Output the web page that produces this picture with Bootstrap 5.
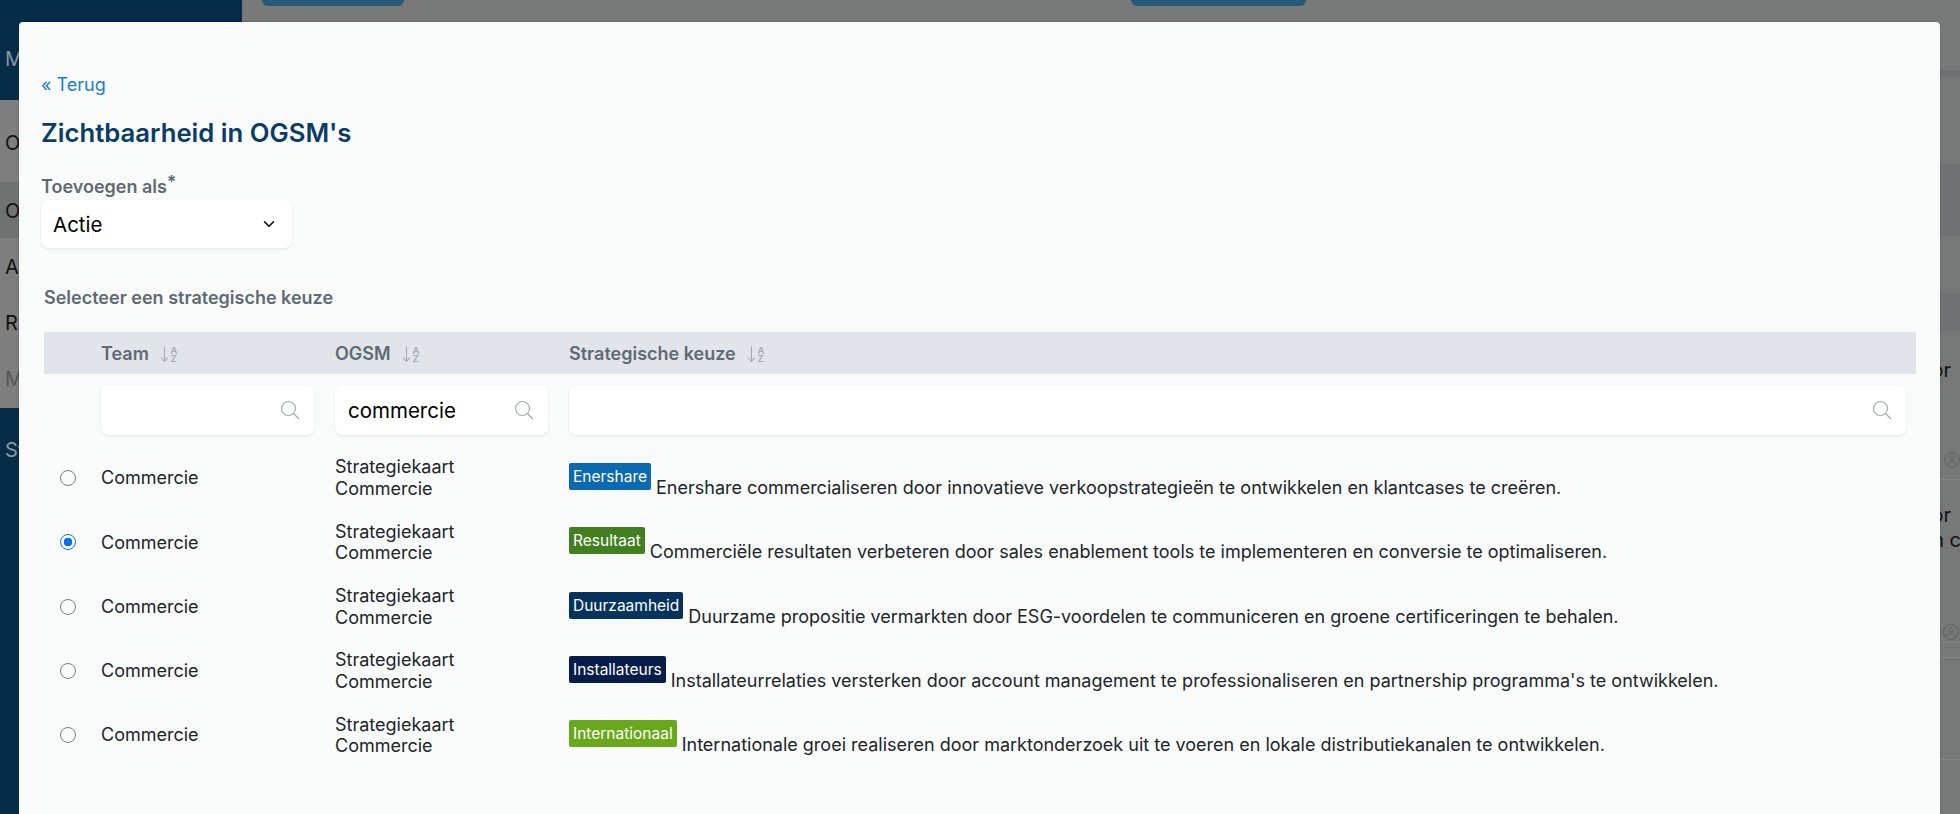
<!DOCTYPE html>
<html lang="nl">
<head>
<meta charset="utf-8">
<title>Zichtbaarheid in OGSM's</title>
<link href="https://cdn.jsdelivr.net/npm/bootstrap@5.3.0/dist/css/bootstrap.min.css" rel="stylesheet">
<style>
html,body{height:814px;overflow:hidden}
body{font-family:Inter,"Liberation Sans",sans-serif;background:#777978;color:#212529;font-size:18px}
.stage{height:814px;overflow:hidden;position:relative}
.side{width:242px;flex:none;background:#062c48;font-size:20px}
.side-top{height:100px;padding:44px 0 0 5px;color:#8b97a0}
.side-menu{height:308px;background:#7d7e7d;color:#111}
.side-row{height:56px;padding:14px 0 0 5px}
.side-row.first{height:82px;padding-top:28px}
.side-row.dim{background:#707171}
.side-row.faint{color:#555}
.side-foot{padding:27px 0 0 5px;color:#8b97a0}
.rail{flex:1;min-width:0;color:#111;font-size:20px;line-height:25px}
.btn-row{height:70px;padding-left:20px;gap:727px}
.top-btn{height:6px;width:142px;background:#285a75;border-radius:0 0 6px 6px}
.top-btn.wide{width:175px}
.band{background:#6f7172}
.b7{height:7px}.b87{height:87px}.b72{height:72px}.b57{height:57px}.b38{height:38px}
.rail-row{border-bottom:1px solid #828483;padding-right:9px;text-align:right;overflow:hidden;white-space:nowrap}
.rr1{height:149px;padding-top:27px}
.rr2{height:163px;padding-top:23px}
.rr3{height:15px}
.rr4{height:102px}
.rail-row svg{display:block;margin-left:auto;color:#5f6060}
.rr1 svg{margin-top:69px;margin-right:-9px}
.rr2 svg{margin-top:71px;margin-right:-8px}
.rail-txt{display:block}
.rail-txt.tail{margin-right:-10px}
.sheet{position:absolute;left:19px;top:22px;width:1921px;height:820px;background:#f9fbfb;border:0;border-radius:4px;box-shadow:0 0 2px rgba(0,0,0,.35);padding:50px 25px 0 22px}
.back{display:block;color:#1a7fc9;text-decoration:none;font-size:18px;line-height:26px;margin-bottom:19.5px}
.ttl{color:#0b3c66;font-size:25.7px;font-weight:600;line-height:30px;margin:0 0 28.5px}
.lbl{display:block;color:#5f6a73;font-weight:600;font-size:18px;line-height:22px;margin:0}
.lbl sup{font-size:17px;top:-.3em;line-height:0}
.pick{width:251px;height:48px;border:0;border-radius:8px;font-size:20.5px;color:#000;padding:2px 12px 0;margin-top:2px;box-shadow:0 1px 3px rgba(0,0,0,.09);background-position:right 16px center;background-size:14px 12px;--bs-form-select-bg-img:url("data:image/svg+xml,%3csvg xmlns='http://www.w3.org/2000/svg' viewBox='0 0 16 16'%3e%3cpath fill='none' stroke='%23000' stroke-linecap='round' stroke-linejoin='round' stroke-width='2' d='m2 5 6 6 6-6'/%3e%3c/svg%3e")}
.sub{color:#5f6a73;font-weight:600;font-size:18px;line-height:22px;margin:39px 0 23px 3px}
.grid-tbl{width:1872px;table-layout:fixed;margin:0 0 0 3px;--bs-table-bg:transparent;color:#212529;border-collapse:collapse}
.grid-tbl td,.grid-tbl th{border:0;padding:0 10px;box-shadow:none}
.grid-tbl thead th{background:#e1e4e8;height:42px;color:#5f6a73;font-weight:600;font-size:18px;vertical-align:middle}
.grid-tbl .filters td{height:72px;vertical-align:top;padding-top:11px}
.grid-tbl tbody tr.item td{height:64.3px;vertical-align:middle;line-height:21.8px;font-size:18px}
.grid-tbl tbody tr.item td.txt{padding-top:5px}
.sort{margin-left:11px;vertical-align:-4px}
.sort text{font-family:Inter,sans-serif;font-size:9.5px;fill:#a3abb2}
.find{position:relative;margin-right:1px}
.filters td:last-child .find{margin-right:0}
.find input{display:block;width:100%;height:50px;border:0;border-radius:8px;background:#fff;box-shadow:0 1px 3px rgba(0,0,0,.09);font-size:20.5px;color:#000;padding:0 40px 0 13px}
.find svg{position:absolute;right:14px;top:15px}
.form-check-input.rd{width:16px;height:16px;margin:0 0 0 6px;display:block;background-color:transparent;border:1px solid #7c7c7c}
.form-check-input.rd:checked{--bs-form-check-bg-image:radial-gradient(circle,#0d6efd 0 42%,#fff 46% 100%);background-color:#fff;border:1.5px solid #0d6efd}
.tag{display:inline-block;color:#fff;font-size:15.5px;font-weight:400;line-height:19px;padding:4px;border-radius:2px;vertical-align:11.5px;margin-right:5px}
.tg1{background:#0a69b1}
.tg2{background:#42801f}
.tg3{background:#06335c}
.tg4{background:#061d49}
.tg5{background:#69a819}
</style>
</head>
<body>
<div class="stage d-flex">
  <aside class="side">
    <div class="side-top">M</div>
    <div class="side-menu">
      <div class="side-row first">O</div>
      <div class="side-row dim">O</div>
      <div class="side-row">A</div>
      <div class="side-row">R</div>
      <div class="side-row faint">M</div>
    </div>
    <div class="side-foot">St</div>
  </aside>
  <div class="rail">
    <div class="btn-row d-flex">
      <div class="top-btn"></div>
      <div class="top-btn wide"></div>
    </div>
    <div class="band b7"></div>
    <div class="b87"></div>
    <div class="band b72"></div>
    <div class="b57"></div>
    <div class="band b38"></div>
    <div class="rail-row rr1">
      <span class="rail-txt">or</span>
      <svg width="16" height="16" viewBox="0 0 16 16" fill="none" stroke="currentColor" stroke-width=".9"><circle cx="8" cy="8" r="7.4"/><circle cx="8" cy="6" r="2.1"/><path d="M3.2 13c.5-2.500 2.400-3.600 4.800-3.600s4.300 1.100 4.800 3.600"/></svg>
    </div>
    <div class="rail-row rr2">
      <span class="rail-txt">or</span>
      <span class="rail-txt tail">n c</span>
      <svg width="16" height="16" viewBox="0 0 16 16" fill="none" stroke="currentColor" stroke-width=".9"><circle cx="8" cy="8" r="7.4"/><circle cx="8" cy="6" r="2.1"/><path d="M3.2 13c.5-2.500 2.400-3.600 4.800-3.600s4.300 1.100 4.800 3.600"/></svg>
    </div>
    <div class="rail-row rr3"></div>
    <div class="rail-row rr4"></div>
  </div>

  <div class="modal-content sheet">
    <a href="#" class="back">« Terug</a>
    <h1 class="ttl">Zichtbaarheid in OGSM's</h1>
    <label class="lbl" for="kind">Toevoegen als<sup>*</sup></label>
    <select id="kind" class="form-select pick"><option>Actie</option></select>
    <p class="sub">Selecteer een strategische keuze</p>
    <table class="table grid-tbl">
      <colgroup><col style="width:47px"><col style="width:234px"><col style="width:234px"><col></colgroup>
      <thead>
        <tr>
          <th></th>
          <th>Team<svg class="sort" width="18" height="20" viewBox="0 0 18 20"><path d="M4.500 2.500v15M1 13.500l3.500 4 3.500-4" fill="none" stroke="#a3abb2" stroke-width="1.100"/><text x="10.500" y="9.500">A</text><text x="10.500" y="18">Z</text></svg></th>
          <th>OGSM<svg class="sort" width="18" height="20" viewBox="0 0 18 20"><path d="M4.500 2.500v15M1 13.500l3.500 4 3.500-4" fill="none" stroke="#a3abb2" stroke-width="1.100"/><text x="10.500" y="9.500">A</text><text x="10.500" y="18">Z</text></svg></th>
          <th>Strategische keuze<svg class="sort" width="18" height="20" viewBox="0 0 18 20"><path d="M4.500 2.500v15M1 13.500l3.500 4 3.500-4" fill="none" stroke="#a3abb2" stroke-width="1.100"/><text x="10.500" y="9.500">A</text><text x="10.500" y="18">Z</text></svg></th>
        </tr>
      </thead>
      <tbody>
        <tr class="filters">
          <td></td>
          <td><div class="find"><input type="text" aria-label="Team"><svg width="20" height="20" viewBox="0 0 20 20" fill="none" stroke="#a3abb2" stroke-width="1.200"><circle cx="8.500" cy="8.500" r="7"/><path d="m13.500 13.500 5.500 5.500"/></svg></div></td>
          <td><div class="find"><input type="text" value="commercie" aria-label="OGSM"><svg width="20" height="20" viewBox="0 0 20 20" fill="none" stroke="#a3abb2" stroke-width="1.200"><circle cx="8.500" cy="8.500" r="7"/><path d="m13.500 13.500 5.500 5.500"/></svg></div></td>
          <td><div class="find"><input type="text" aria-label="Strategische keuze"><svg width="20" height="20" viewBox="0 0 20 20" fill="none" stroke="#a3abb2" stroke-width="1.200"><circle cx="8.500" cy="8.500" r="7"/><path d="m13.500 13.500 5.500 5.500"/></svg></div></td>
        </tr>
        <tr class="item"><td><input class="form-check-input rd" type="radio" name="keuze" aria-label="Enershare"></td><td>Commercie</td><td>Strategiekaart Commercie</td><td class="txt"><span class="tag tg1">Enershare</span>Enershare commercialiseren door innovatieve verkoopstrategieën te ontwikkelen en klantcases te creëren.</td></tr>
        <tr class="item"><td><input class="form-check-input rd" type="radio" name="keuze" aria-label="Resultaat" checked></td><td>Commercie</td><td>Strategiekaart Commercie</td><td class="txt"><span class="tag tg2">Resultaat</span>Commerciële resultaten verbeteren door sales enablement tools te implementeren en conversie te optimaliseren.</td></tr>
        <tr class="item"><td><input class="form-check-input rd" type="radio" name="keuze" aria-label="Duurzaamheid"></td><td>Commercie</td><td>Strategiekaart Commercie</td><td class="txt"><span class="tag tg3">Duurzaamheid</span>Duurzame propositie vermarkten door ESG-voordelen te communiceren en groene certificeringen te behalen.</td></tr>
        <tr class="item"><td><input class="form-check-input rd" type="radio" name="keuze" aria-label="Installateurs"></td><td>Commercie</td><td>Strategiekaart Commercie</td><td class="txt"><span class="tag tg4">Installateurs</span>Installateurrelaties versterken door account management te professionaliseren en partnership programma's te ontwikkelen.</td></tr>
        <tr class="item"><td><input class="form-check-input rd" type="radio" name="keuze" aria-label="Internationaal"></td><td>Commercie</td><td>Strategiekaart Commercie</td><td class="txt"><span class="tag tg5">Internationaal</span>Internationale groei realiseren door marktonderzoek uit te voeren en lokale distributiekanalen te ontwikkelen.</td></tr>
      </tbody>
    </table>
  </div>
</div>
<script src="https://cdn.jsdelivr.net/npm/bootstrap@5.3.0/dist/js/bootstrap.bundle.min.js"></script>
</body>
</html>
